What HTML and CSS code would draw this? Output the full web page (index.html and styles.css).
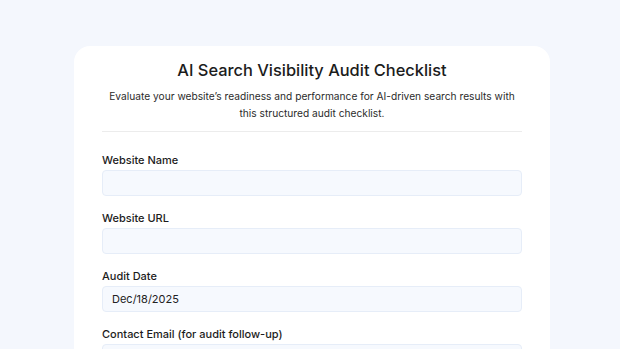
FILE: index.html
```html
<!DOCTYPE html>
<html lang="en">
  <head>
    <meta charset="UTF-8" />
    <meta name="viewport" content="width=device-width, initial-scale=1.0" />
    <title>AI Search Visibility Audit Checklist</title>
    <link rel="stylesheet" href="styles.css">
  </head>
  <body>
    <div class="card">
      <h1 class="title">AI Search Visibility Audit Checklist</h1>
      <p class="intro">
        Evaluate your website’s readiness and performance for AI-driven search results with
        this structured audit checklist.
      </p>
      <form class="audit-form">
        <div class="field">
          <label for="site-name">Website Name</label>
          <input type="text" id="site-name" class="input-field" />
        </div>
        <div class="field">
          <label for="site-url">Website URL</label>
          <input type="text" id="site-url" class="input-field" />
        </div>
        <div class="field">
          <label for="audit-date">Audit Date</label>
          <input type="text" id="audit-date" class="input-field" value="Dec/18/2025" />
        </div>
        <div class="field">
          <label for="contact-email">Contact Email (for audit follow-up)</label>
          <input type="text" id="contact-email" class="input-field" />
        </div>
      </form>
    </div>
  </body>
</html>
```

FILE: styles.css
```css
* {
  margin: 0;
  padding: 0;
  font-family: Inter, "Noto Sans", sans-serif;
  box-sizing: border-box;
}
body {
  display: flex;
  justify-content: center;
  padding: 46px 0 0 4px;
  min-height: 100vh;
  background-color: #f4f7fd;
  color: #1c1c1c;
}
.card {
  width: 476px;
  padding: 14px 28px 0;
  background-color: #fff;
  border-radius: 16px;
}
.title {
  font-size: 16.4px;
  font-weight: 500;
  text-align: center;
  line-height: 20px;
}
.intro {
  margin-top: 8px;
  font-size: 10.2px;
  line-height: 17px;
  text-align: center;
  color: #2b2b2b;
  padding-bottom: 9px;
  border-bottom: 1px solid #ececec;
}
.audit-form {
  display: flex;
  flex-direction: column;
  gap: 15px;
  padding-top: 21px;
}
.field {
  display: flex;
  flex-direction: column;
  gap: 3px;
}
.field label {
  font-size: 11px;
  font-weight: 500;
  line-height: 14px;
}
.input-field {
  height: 26px;
  padding: 0 9px;
  font-size: 11px;
  color: #222;
  background-color: #f6f9fe;
  border: 1px solid #e6edf8;
  border-radius: 4px;
  outline: none;
}
```
